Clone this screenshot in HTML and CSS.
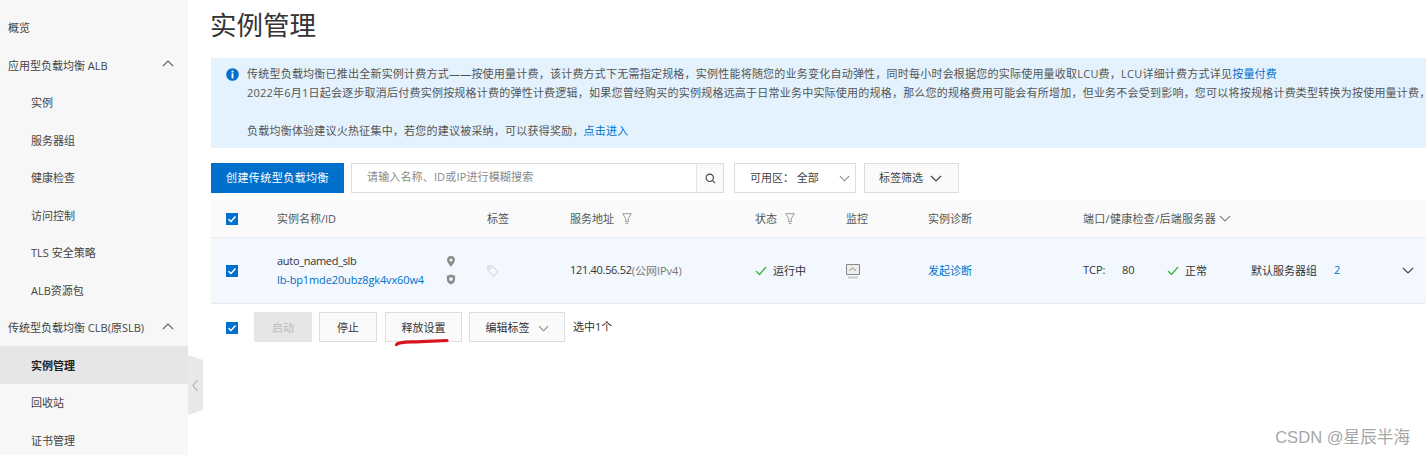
FILE: index.html
```html
<!DOCTYPE html>
<html lang="zh-CN">
<head>
<meta charset="utf-8">
<title>实例管理</title>
<link rel="stylesheet" href="styles.css">
</head>
<body>
<div class="app">
  <nav class="side">
    <a class="nav">概览</a>
    <a class="nav group">应用型负载均衡 ALB<svg class="caret" viewBox="0 0 12 7"><path d="M1 6l5-5 5 5"/></svg></a>
    <a class="nav sub">实例</a>
    <a class="nav sub">服务器组</a>
    <a class="nav sub">健康检查</a>
    <a class="nav sub">访问控制</a>
    <a class="nav sub">TLS 安全策略</a>
    <a class="nav sub">ALB资源包</a>
    <a class="nav group">传统型负载均衡 CLB(原SLB)<svg class="caret" viewBox="0 0 12 7"><path d="M1 6l5-5 5 5"/></svg></a>
    <a class="nav sub active">实例管理</a>
    <a class="nav sub">回收站</a>
    <a class="nav sub">证书管理</a>
    <div class="handle"><svg viewBox="0 0 15 60"><path class="handle-bg" d="M0 0L15 5V55L0 60Z"/><path class="handle-arrow" d="M9.500 25L5 30.500L9.500 36"/></svg></div>
  </nav>
  <main class="main">
    <h1 class="title">实例管理</h1>
    <section class="notice">
      <svg class="info" viewBox="0 0 14 14"><circle cx="7" cy="7" r="6.800"/><rect x="6" y="2.800" width="2" height="2"/><rect x="6" y="5.800" width="2" height="5.400"/></svg>
      <div class="notice-text">
        <p>传统型负载均衡已推出全新实例计费方式——按使用量计费，该计费方式下无需指定规格，实例性能将随您的业务变化自动弹性，同时每小时会根据您的实际使用量收取LCU费，LCU详细计费方式详见<a class="link">按量付费</a></p>
        <p>2022年6月1日起会逐步取消后付费实例按规格计费的弹性计费逻辑，如果您曾经购买的实例规格远高于日常业务中实际使用的规格，那么您的规格费用可能会有所增加，但业务不会受到影响，您可以将按规格计费类型转换为按使用量计费，</p>
        <p>&nbsp;</p>
        <p>负载均衡体验建议火热征集中，若您的建议被采纳，可以获得奖励，<a class="link">点击进入</a></p>
      </div>
    </section>
    <div class="toolbar">
      <button class="btn primary">创建传统型负载均衡</button>
      <div class="search">
        <span class="placeholder">请输入名称、ID或IP进行模糊搜索</span>
        <span class="search-btn"><svg viewBox="0 0 12 12"><circle cx="5.200" cy="5.200" r="4"/><path d="M8 8l3 3"/></svg></span>
      </div>
      <div class="select zone"><span>可用区：&nbsp;全部</span><svg class="chev light" viewBox="0 0 12 7"><path d="M1 1l5 5 5-5"/></svg></div>
      <div class="select tagf"><span>标签筛选</span><svg class="chev" viewBox="0 0 12 7"><path d="M1 1l5 5 5-5"/></svg></div>
    </div>
    <div class="table">
      <div class="row head">
        <div class="cell"><span class="check"><svg viewBox="0 0 12 12"><path d="M2.500 6.200l2.500 2.300 4.500-5"/></svg></span></div>
        <div class="cell">实例名称/ID</div>
        <div class="cell">标签</div>
        <div class="cell">服务地址<svg class="filter" viewBox="0 0 10 11"><path d="M.7.700h8.600L6.300 5.500v3H3.700v-3z"/><path d="M3.500 10.300h3"/></svg></div>
        <div class="cell">状态<svg class="filter" viewBox="0 0 10 11"><path d="M.7.700h8.600L6.300 5.500v3H3.700v-3z"/><path d="M3.500 10.300h3"/></svg></div>
        <div class="cell">监控</div>
        <div class="cell">实例诊断</div>
        <div class="cell port-head">端口/健康检查/后端服务器<svg class="chev small" viewBox="0 0 12 7"><path d="M1 1l5 5 5-5"/></svg></div>
      </div>
      <div class="row body">
        <div class="cell"><span class="check"><svg viewBox="0 0 12 12"><path d="M2.500 6.200l2.500 2.300 4.500-5"/></svg></span></div>
        <div class="cell name">
          <div class="name-text">
            <div class="inst">auto_named_slb</div>
            <a class="link inst-id">lb-bp1mde20ubz8gk4vx60w4</a>
          </div>
          <div class="name-icons">
            <svg viewBox="0 0 10 12"><path class="fill" fill-rule="evenodd" d="M5 0a4.300 4.300 0 0 1 4.300 4.300C9.300 7 5 11.500 5 11.500S.7 7 .7 4.300A4.300 4.300 0 0 1 5 0zm0 2.700a1.700 1.700 0 1 0 0 3.400 1.700 1.700 0 0 0 0-3.400z"/></svg>
            <svg viewBox="0 0 10 12"><path class="fill" fill-rule="evenodd" d="M5 .5l4.500 1.500v4c0 3-2.500 4.700-4.500 5.500C3 10.700.5 9 .5 6V2zm0 3a2 2 0 1 0 0 4 2 2 0 0 0 0-4z"/></svg>
          </div>
        </div>
        <div class="cell"><svg class="tag" viewBox="0 0 12 12"><path d="M1 1h4.500l5.500 5.500L6.500 11 1 5.500z"/><circle cx="3.500" cy="3.500" r=".6"/></svg></div>
        <div class="cell"><span class="ip">121.40.56.52</span><span class="muted">(公网IPv4)</span></div>
        <div class="cell"><svg class="ok" viewBox="0 0 12 10"><path d="M1 5l3.500 3.500L11 1"/></svg><span class="gap-left">运行中</span></div>
        <div class="cell"><svg class="monitor" viewBox="0 0 14 15"><path class="screen" d="M.5.500h13v10H.5z"/><path d="M3.500 6.500l3-2.500 3.500 2.500"/><path class="bar" d="M2 13.500h10"/></svg></div>
        <div class="cell"><a class="link">发起诊断</a></div>
        <div class="cell ports">
          <span class="tcp">TCP:</span><span class="port">80</span>
          <svg class="ok" viewBox="0 0 12 10"><path d="M1 5l3.500 3.500L11 1"/></svg><span class="health">正常</span>
          <span class="group-name">默认服务器组</span><a class="link count">2</a>
          <svg class="chev expand" viewBox="0 0 12 7"><path d="M1 1l5 5 5-5"/></svg>
        </div>
      </div>
    </div>
    <div class="actions">
      <span class="check"><svg viewBox="0 0 12 12"><path d="M2.500 6.200l2.500 2.300 4.500-5"/></svg></span>
      <button class="btn disabled">启动</button>
      <button class="btn plain stop">停止</button>
      <button class="btn plain release">释放设置</button>
      <button class="btn plain edit">编辑标签<svg class="chev light" viewBox="0 0 12 7"><path d="M1 1l5 5 5-5"/></svg></button>
      <span class="selected">选中1个</span>
    </div>
  </main>
</div>
<svg class="scribble" viewBox="0 0 56 9"><path d="M2.500 6.500C5 3.800 12 4.200 22 3.800S42 3 53 2.500"/></svg>
<div class="watermark">CSDN @星辰半海</div>
</body>
</html>
```
FILE: styles.css
```css
* { box-sizing: border-box; }
html, body { margin: 0; height: 100%; }
body {
  width: 1426px;
  height: 455px;
  overflow: hidden;
  position: relative;
  background: #fff;
  color: #333;
  font-family: "Open Sans", "Noto Sans CJK SC", sans-serif;
  font-size: 11px;
}
p { margin: 0; }
svg { display: block; flex: none; fill: none; }
.app { display: flex; height: 455px; }
.side {
  position: relative;
  flex: 0 0 188px;
  padding-top: 8.500px;
  background: #f7f7f7;
}
.nav {
  display: flex;
  align-items: center;
  height: 37.500px;
  padding: 0 0 0 8px;
  color: #444;
  white-space: nowrap;
}
.nav.sub { padding-left: 31px; }
.nav.active { background: #e6e6e6; color: #222; font-weight: 700; }
.caret { position: absolute; left: 162px; width: 12px; height: 7px; margin-top: -2px; }
.caret path { stroke: #666; stroke-width: 1.200; }
.handle { position: absolute; left: 188px; top: 355px; width: 15px; height: 60px; }
.handle svg { width: 15px; height: 60px; }
.handle-bg { fill: #e8e8e8; }
.handle-arrow { stroke: #aaa; stroke-width: 1.100; }
.main { flex: 1; min-width: 0; padding-left: 22px; overflow: hidden; }
.title {
  margin: 0;
  height: 58px;
  padding-top: 7px;
  font-size: 26.500px;
  line-height: 36px;
  font-weight: 400;
  color: #333;
}
.notice {
  display: flex;
  height: 90px;
  margin-left: 1px;
  padding: 6px 0 0 15px;
  background: #e3f2fd;
  white-space: nowrap;
  overflow: hidden;
}
.info { width: 13px; height: 13px; margin: 4px 8px 0 0; }
.info circle { fill: #0070cc; }
.info rect { fill: #fff; }
.notice-text { line-height: 19px; color: #555; letter-spacing: .220px; }
.link { color: #0070cc; }
.toolbar { display: flex; height: 30px; margin: 15px 0 0 1px; }
.btn {
  height: 30px;
  padding: 0 0 2px;
  border: 1px solid #ddd;
  background: #fff;
  color: #333;
  font: inherit;
}
.btn.primary { width: 133px; border: 0; background: #0070cc; color: #fff; letter-spacing: .450px; }
.search {
  display: flex;
  width: 373px;
  margin-left: 7px;
  border: 1px solid #ddd;
}
.placeholder { flex: 1; padding-left: 15px; line-height: 26px; color: #888; letter-spacing: .150px; }
.search-btn {
  display: flex;
  align-items: center;
  justify-content: center;
  width: 27px;
  border-left: 1px solid #e5e5e5;
  background: #fafafa;
}
.search-btn svg { width: 11px; height: 11px; }
.search-btn circle, .search-btn path { stroke: #444; stroke-width: 1.200; }
.select {
  display: flex;
  align-items: center;
  padding-bottom: 2px;
  border: 1px solid #ddd;
  color: #444;
}
.select .chev { margin-top: 2px; }
.zone { width: 122px; margin-left: 10px; padding-left: 15px; gap: 20px; }
.tagf { width: 95px; margin-left: 8px; padding-left: 14px; gap: 7px; background: #fafafa; }
.tagf .chev { width: 12px; }
.chev { width: 11px; height: 7px; }
.chev path { stroke: #444; stroke-width: 1.200; }
.chev.light path { stroke: #888; }
.table { margin: 7px 0 0 1px; }
.row {
  display: grid;
  grid-template-columns: 66px 210px 83px 185px 91px 82px 155px 1fr;
  align-items: center;
  border-bottom: 1px solid #e8ebee;
}
.row.head { height: 38px; background: #fafafa; color: #555; }
.row.body { height: 66px; background: #f2f8fe; }
.cell { display: flex; align-items: center; padding-bottom: 2px; white-space: nowrap; }
.cell:first-child { padding: 1px 0 0 15px; }
.check {
  display: block;
  width: 12px;
  height: 12px;
  background: #0070cc;
}
.check svg { width: 12px; height: 12px; }
.check path { stroke: #fff; stroke-width: 1.500; }
.filter { width: 10px; height: 11px; margin: 2px 0 0 8px; }
.filter path { stroke: #999; stroke-width: 1; }
.port-head { letter-spacing: .300px; }
.chev.small { margin: 2px 0 0 3px; width: 12px; height: 7px; }
.chev.small path { stroke: #888; }
.name { justify-content: flex-start; gap: 22px; padding-bottom: 0; }
.name-text { width: 147px; }
.inst { line-height: 18.500px; letter-spacing: -.300px; }
.inst-id { display: block; line-height: 18.500px; letter-spacing: -.130px; }
.name-icons { display: flex; flex-direction: column; gap: 7px; margin-top: -1px; }
.name-icons svg { width: 10px; height: 11px; }
.fill { fill: #8c8c8c; }
.tag { width: 12px; height: 12px; margin-top: 2px; }
.tag path, .tag circle { stroke: #ccc; stroke-width: 1; }
.ip { letter-spacing: -.300px; }
.muted { color: #777; }
.ok { width: 12px; height: 10px; margin-top: 2px; }
.ok path { stroke: #3eb53e; stroke-width: 1.300; }
.gap-left { margin-left: 6px; }
.monitor { width: 14px; height: 15px; margin-top: 4px; }
.monitor path { stroke: #888; stroke-width: 1; }
.monitor .screen { fill: #ececec; }
.monitor .bar { stroke-width: 2; stroke: #ccc; }
.ports { position: relative; }
.tcp { width: 39px; }
.port { width: 45px; }
.health { margin-left: 6px; width: 66px; }
.group-name { width: 83px; }
.count { width: 68px; }
.expand { width: 12px; height: 7px; margin-top: 2px; }
.actions { display: flex; align-items: center; height: 30px; margin: 8px 0 0 1px; padding-left: 15px; }
.actions .check { width: 12px; height: 12px; margin: 1px 16px 0 0; }
.actions .btn { padding-bottom: 0; }
.btn.disabled { width: 58px; border: 0; background: #e6e6e6; color: #bbb; margin-right: 7px; }
.stop { width: 58px; margin-right: 8px; background: #fafafa; }
.release { width: 77px; margin-right: 7px; background: #fafafa; }
.edit {
  display: flex;
  align-items: center;
  justify-content: center;
  gap: 8px;
  width: 96px;
  background: #fafafa;
}
.edit .chev { margin-top: 2px; }
.selected { margin-left: 8px; padding-bottom: 2px; }
.scribble { position: absolute; left: 394px; top: 338px; width: 56px; height: 9px; }
.scribble path { stroke: #d8141c; stroke-width: 3.200; stroke-linecap: round; }
.watermark {
  position: absolute;
  right: 16px;
  bottom: 6px;
  font-family: "Liberation Sans", "Noto Sans CJK SC", sans-serif;
  font-size: 16.600px;
  line-height: 22px;
  color: #a6a6a6;
  white-space: nowrap;
}
```
